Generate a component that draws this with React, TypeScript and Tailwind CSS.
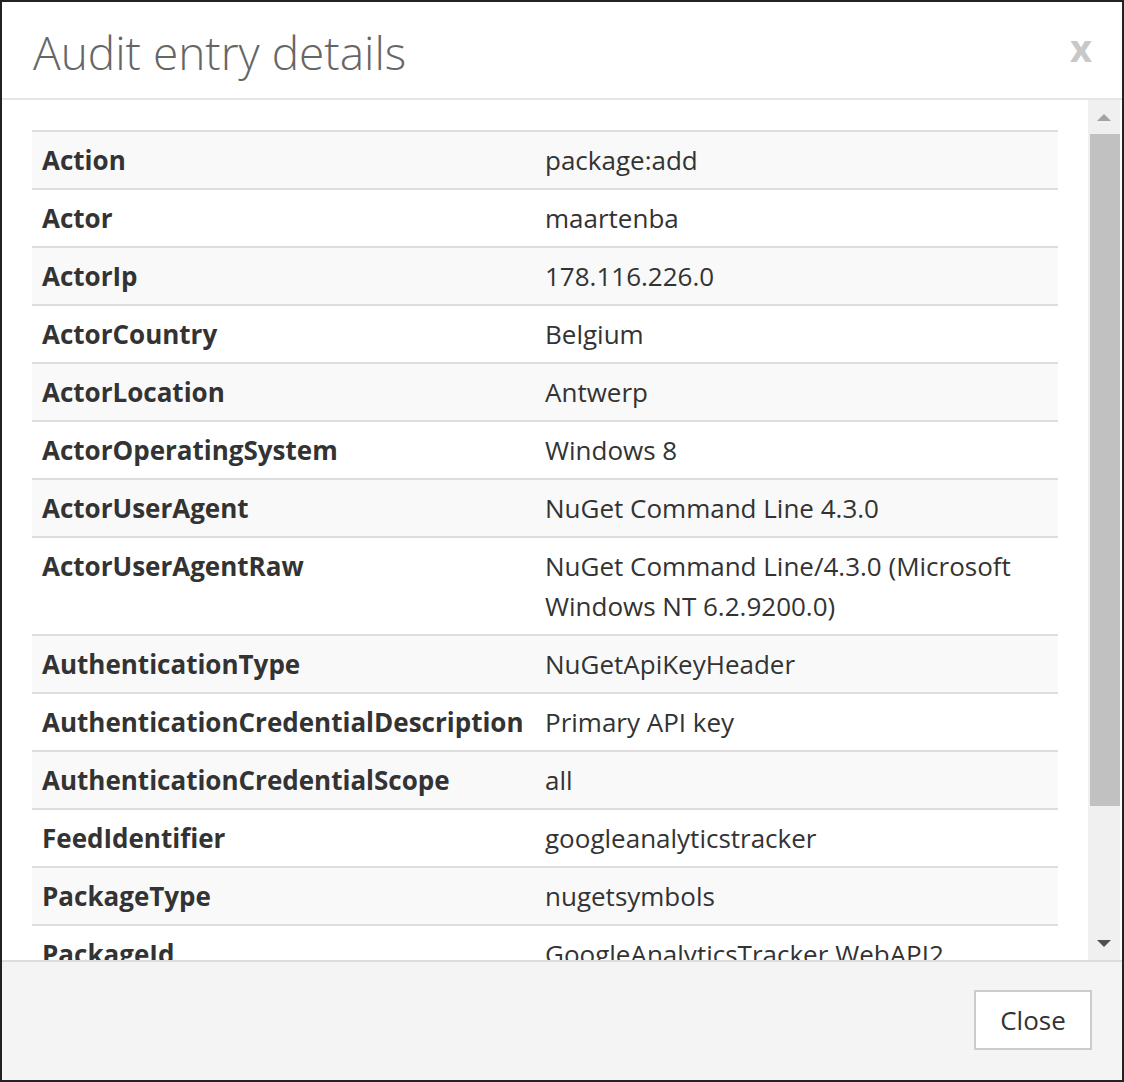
import React from "react";

const rows: [string, string][] = [
  ["Action", "package:add"],
  ["Actor", "maartenba"],
  ["ActorIp", "178.116.226.0"],
  ["ActorCountry", "Belgium"],
  ["ActorLocation", "Antwerp"],
  ["ActorOperatingSystem", "Windows 8"],
  ["ActorUserAgent", "NuGet Command Line 4.3.0"],
  ["ActorUserAgentRaw", "NuGet Command Line/4.3.0 (Microsoft Windows NT 6.2.9200.0)"],
  ["AuthenticationType", "NuGetApiKeyHeader"],
  ["AuthenticationCredentialDescription", "Primary API key"],
  ["AuthenticationCredentialScope", "all"],
  ["FeedIdentifier", "googleanalyticstracker"],
  ["PackageType", "nugetsymbols"],
  ["PackageId", "GoogleAnalyticsTracker.WebAPI2"],
];

export default function App() {
  return (
    <div className="w-[1124px] h-[1082px] bg-[#222] p-[2px] font-['Open_Sans',sans-serif] text-[#333]">
      <div className="flex flex-col h-full bg-white">
        {/* Header */}
        <div className="h-[98px] shrink-0 flex items-center justify-between pl-[31px] pr-[30px] border-b-2 border-[#e5e5e5]">
          <h1 className="text-[46px] font-light text-[#666] leading-none mt-[4px]">Audit entry details</h1>
          <button className="text-[38px] font-bold text-[#c8c8c8] leading-none -mt-[6px]">x</button>
        </div>

        {/* Body */}
        <div className="flex-1 min-h-0 flex">
          <div className="flex-1 min-w-0 overflow-hidden p-[30px]">
            <div className="border-b-2 border-[#ddd]">
              {rows.map(([k, v], i) => (
                <div
                  key={k}
                  className={`grid grid-cols-[504px_1fr] border-t-2 border-[#ddd] ${i % 2 === 0 ? "bg-[#f9f9f9]" : "bg-white"}`}
                >
                  <div className="px-[10px] py-[8px] text-[26px] leading-[40px] font-bold whitespace-nowrap">{k}</div>
                  <div className="pl-[9px] pr-[10px] py-[8px] text-[26px] leading-[40px]">{v}</div>
                </div>
              ))}
            </div>
          </div>

          {/* Scrollbar */}
          <div className="w-[32px] mr-[2px] shrink-0 bg-[#f0f0f0] flex flex-col">
            <div className="h-[34px] flex items-center justify-center">
              <div className="w-0 h-0 border-l-[7px] border-r-[7px] border-b-[7px] border-l-transparent border-r-transparent border-b-[#a3a3a3]" />
            </div>
            <div className="h-[672px] ml-[2px] bg-[#c1c1c1]" />
            <div className="flex-1" />
            <div className="h-[34px] flex items-center justify-center">
              <div className="w-0 h-0 border-l-[7px] border-r-[7px] border-t-[7px] border-l-transparent border-r-transparent border-t-[#505050]" />
            </div>
          </div>
        </div>

        {/* Footer */}
        <div className="h-[120px] shrink-0 bg-[#f4f4f4] border-t-2 border-[#ddd] flex justify-end items-start pt-[28px] pr-[29px]">
          <button className="w-[118px] h-[60px] mr-[1px] bg-white border-2 border-[#ccc] text-[26px] text-[#333] leading-none">Close</button>
        </div>
      </div>
    </div>
  );
}
